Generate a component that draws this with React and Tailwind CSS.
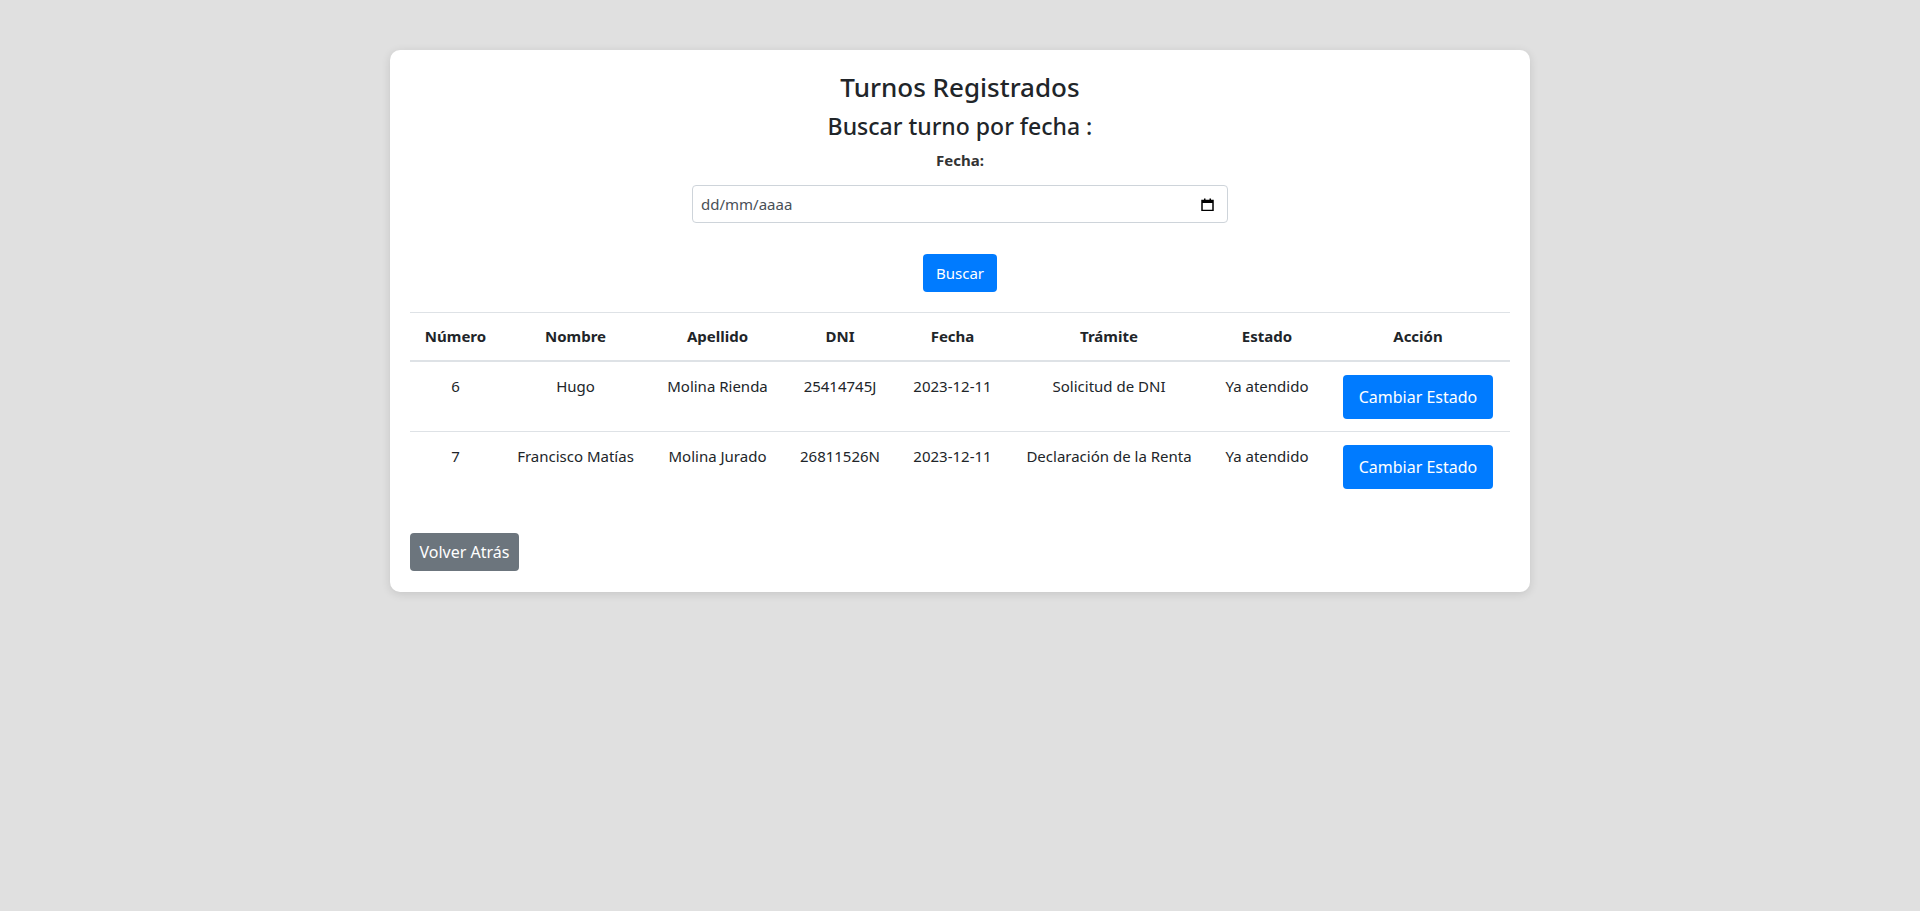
export default function App() {
  const turnos = [
    {
      numero: 6,
      nombre: "Hugo",
      apellido: "Molina Rienda",
      dni: "25414745J",
      fecha: "2023-12-11",
      tramite: "Solicitud de DNI",
      estado: "Ya atendido",
    },
    {
      numero: 7,
      nombre: "Francisco Matías",
      apellido: "Molina Jurado",
      dni: "26811526N",
      fecha: "2023-12-11",
      tramite: "Declaración de la Renta",
      estado: "Ya atendido",
    },
  ];

  const columns = [
    { label: "Número", width: "w-[91px]" },
    { label: "Nombre", width: "w-[149px]" },
    { label: "Apellido", width: "w-[135px]" },
    { label: "DNI", width: "w-[110px]" },
    { label: "Fecha", width: "w-[115px]" },
    { label: "Trámite", width: "w-[198px]" },
    { label: "Estado", width: "w-[118px]" },
    { label: "Acción", width: "w-[184px]" },
  ];

  return (
    <div
      className="min-h-[911px] bg-[#e0e0e0] pt-[50px] text-[#212529]"
      style={{ fontFamily: '"Noto Sans", "Open Sans", sans-serif' }}
    >
      <div className="mx-auto w-[1140px] rounded-[10px] bg-white px-5 pt-5 pb-[21px] shadow-[0_2px_10px_rgba(0,0,0,0.12)]">
        <h2 className="text-center text-[26px] leading-[34px] font-medium mb-2">
          Turnos Registrados
        </h2>
        <h4 className="text-center text-[23px] leading-[29px] font-medium mb-[7px]">
          Buscar turno por fecha :
        </h4>

        <div className="flex flex-col items-center">
          <label className="text-[15px] leading-6 font-bold text-[#333]">Fecha:</label>
          <div className="mt-[13px] flex h-[38px] w-[536px] items-center justify-between rounded-[4px] border border-[#ced4da] pl-[8px] pr-[13px] text-[15px] text-[#495057]">
            <span>dd/mm/aaaa</span>
            <svg width="13" height="13" viewBox="0 0 13 13">
              <rect x="1" y="2.5" width="11" height="10" fill="none" stroke="#000" strokeWidth="1.5" />
              <rect x="1" y="2" width="11" height="3" fill="#000" />
              <rect x="3" y="0.5" width="1.5" height="2" fill="#000" />
              <rect x="8.5" y="0.5" width="1.5" height="2" fill="#000" />
            </svg>
          </div>
          <button className="mt-[31px] h-[38px] w-[74px] rounded-[4px] bg-[#007bff] text-[15px] text-white">
            Buscar
          </button>
        </div>

        <table className="mt-[20px] w-[1100px] table-fixed border-collapse text-[15px]">
          <colgroup>
            {columns.map(c => (
              <col key={c.label} className={c.width} />
            ))}
          </colgroup>
          <thead>
            <tr className="border-t border-[#dee2e6] border-b-2 border-b-[#dee2e6]">
              {columns.map(c => (
                <th key={c.label} className="h-[48px] text-center font-bold align-middle">
                  {c.label}
                </th>
              ))}
            </tr>
          </thead>
          <tbody>
            {turnos.map((t, i) => (
              <tr key={t.numero} className={i === 0 ? "border-b border-[#dee2e6]" : ""}>
                <td className="pt-[12px] pb-3 text-center align-top leading-6">{t.numero}</td>
                <td className="pt-[12px] pb-3 text-center align-top leading-6">{t.nombre}</td>
                <td className="pt-[12px] pb-3 text-center align-top leading-6">{t.apellido}</td>
                <td className="pt-[12px] pb-3 text-center align-top leading-6">{t.dni}</td>
                <td className="pt-[12px] pb-3 text-center align-top leading-6">{t.fecha}</td>
                <td className="pt-[12px] pb-3 text-center align-top leading-6">{t.tramite}</td>
                <td className="pt-[12px] pb-3 text-center align-top leading-6">{t.estado}</td>
                <td className="pt-[13px] pb-3 text-center align-top">
                  <button className="mx-auto block h-[44px] w-[150px] rounded-[4px] bg-[#007bff] text-[16px] text-white">
                    Cambiar Estado
                  </button>
                </td>
              </tr>
            ))}
          </tbody>
        </table>

        <button className="mt-[32px] h-[38px] w-[109px] rounded-[4px] bg-[#6c757d] text-[16px] text-white">
          Volver Atrás
        </button>
      </div>
    </div>
  );
}
